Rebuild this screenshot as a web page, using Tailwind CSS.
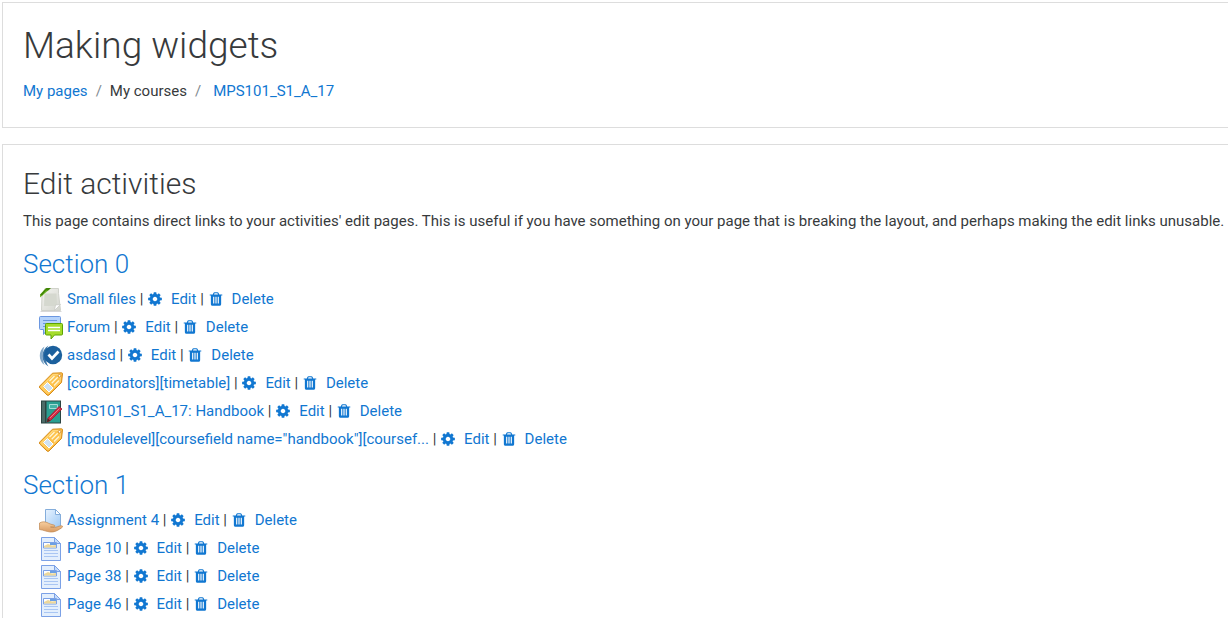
<!DOCTYPE html>
<html lang="en">
<head>
<meta charset="utf-8">
<meta name="viewport" content="width=device-width, initial-scale=1">
<title>Making widgets: Edit activities</title>
<script src="https://cdn.jsdelivr.net/npm/@tailwindcss/browser@4"></script>
</head>
<body class="bg-white pt-0.5 pl-0.5 font-[Roboto,sans-serif] text-[15px] leading-[23px] text-[#373a3c]">

  <!-- Icons used in the lists below -->
  <svg class="absolute size-0" aria-hidden="true">
    <defs>
      <linearGradient id="grey" x1="0" y1="0" x2="1" y2="1">
        <stop offset="0" stop-color="#f4f4f0"/><stop offset="1" stop-color="#d3d5ce"/>
      </linearGradient>
      <linearGradient id="blue" x1="0" y1="0" x2="1" y2="1">
        <stop offset="0" stop-color="#e8f3ff"/><stop offset="1" stop-color="#9cc8f5"/>
      </linearGradient>
      <linearGradient id="orange" x1="0" y1="0" x2="1" y2="1">
        <stop offset="0" stop-color="#ffd468"/><stop offset="1" stop-color="#fbae2c"/>
      </linearGradient>
      <linearGradient id="skin" x1="0" y1="0" x2="0" y2="1">
        <stop offset="0" stop-color="#f8cf9f"/><stop offset="1" stop-color="#d89a62"/>
      </linearGradient>
    </defs>
    <symbol id="cog" viewBox="0 0 1792 1792"><path d="M1152 896q0-106-75-181t-181-75-181 75-75 181 75 181 181 75 181-75 75-181zm512-109v222q0 12-8 23t-20 13l-185 28q-19 54-39 91 35 50 107 138 10 12 10 25t-9 23q-27 37-99 108t-94 71q-12 0-26-9l-138-108q-44 23-91 38-16 136-29 186-7 28-36 28h-222q-14 0-24.5-8.5t-11.5-21.5l-28-184q-49-16-90-37l-141 107q-10 9-25 9-14 0-25-11-126-114-165-168-7-10-7-23 0-12 8-23 15-21 51-66.5t54-70.5q-27-50-41-99l-183-27q-13-2-21-12.5t-8-23.5v-222q0-12 8-23t19-13l186-28q14-46 39-92-40-57-107-138-10-12-10-24 0-10 9-23 26-36 98.5-107.5t94.5-71.5q13 0 26 10l138 107q44-23 91-38 16-136 29-186 7-28 36-28h222q14 0 24.5 8.5t11.5 21.5l28 184q49 16 90 37l142-107q9-9 24-9 13 0 25 10 129 119 165 170 7 8 7 22 0 12-8 23-15 21-51 66.5t-54 70.5q26 50 41 98l183 28q13 2 21 12.5t8 23.5z"/></symbol>
    <symbol id="trash" viewBox="0 0 1792 1792"><path d="M704 1376v-704q0-14-9-23t-23-9h-64q-14 0-23 9t-9 23v704q0 14 9 23t23 9h64q14 0 23-9t9-23zm256 0v-704q0-14-9-23t-23-9h-64q-14 0-23 9t-9 23v704q0 14 9 23t23 9h64q14 0 23-9t9-23zm256 0v-704q0-14-9-23t-23-9h-64q-14 0-23 9t-9 23v704q0 14 9 23t23 9h64q14 0 23-9t9-23zm-544-992h448l-48-117q-7-9-17-11h-317q-10 2-17 11zm928 32v64q0 14-9 23t-23 9h-96v948q0 83-47 143.5t-113 60.5h-832q-66 0-113-58.5t-47-141.5v-952h-96q-14 0-23-9t-9-23v-64q0-14 9-23t23-9h309l70-167q15-37 54-63t79-26h320q40 0 79 26t54 63l70 167h309q14 0 23 9t9 23z"/></symbol>
    <symbol id="file" viewBox="0 0 24 24">
      <path d="M1.500 23.500h21" stroke="#d8d8d8"/>
      <path d="M6 .5h13.500v5l2 17H2.500L3 8z" fill="url(#grey)" stroke="#d0d2cb"/>
      <path d="M5.500 5.500h12l.5 12.500H5z" fill="#d5d8cf"/>
      <path d="M15.500 22.500l1-5.500 5-.5z" fill="#fff" stroke="#c4c6c0" stroke-width=".7"/>
      <path d="M1 9.500V6.500L6.500 .5H11.500z" fill="#74b62a"/>
      <path d="M1 7L7.500 0H12L9 2.500H7L3 7.500z" fill="#3f8505"/>
    </symbol>
    <symbol id="forum" viewBox="0 0 24 24">
      <path d="M1.500 .5h19a1 1 0 0 1 1 1v11a1 1 0 0 1-1 1H8l-3.500 5V13.500h-3a1 1 0 0 1-1-1v-11a1 1 0 0 1 1-1z" fill="#b5d3fb" stroke="#6b97e0"/>
      <path d="M4 4.500h14M4 7.500h14M4 10.500h5" stroke="#6b97e0"/>
      <path d="M7.500 7.500h15a1 1 0 0 1 1 1v9.500a1 1 0 0 1-1 1H15.500l-3.500 4V19H7.500a1 1 0 0 1-1-1V8.500a1 1 0 0 1 1-1z" fill="#a5dc2b" stroke="#5da302"/>
      <path d="M9 11.500h12M9 14.500h12" stroke="#fff" stroke-width="1.500"/>
    </symbol>
    <symbol id="check" viewBox="0 0 24 24">
      <path d="M5.500 2.500C-.8 6.500-.8 17 5.500 21 3 16 3 8 5.500 2.500z" fill="#7fa6c8"/>
      <path d="M9.500 1.500C1.500 5.500 1.500 18.500 9.500 22.500 5.500 17 5.500 7 9.500 1.500z" fill="#3d76a8"/>
      <circle cx="14" cy="11" r="9.200" fill="#1c609d"/>
      <path d="M9.500 10.500l3.500 4 6.500-7" fill="none" stroke="#fff" stroke-width="2.700"/>
    </symbol>
    <symbol id="label" viewBox="0 0 24 24">
      <path d="M13.500 1.200L22.500 .8q1 0 1 1L22.500 10.500 10 23q-1 .8-2 0L.8 16q-.8-1 0-2z" fill="url(#orange)" stroke="#d48c1c"/>
      <path d="M14 2.800L21.500 2.500 21 9.500 9 21.500 2.500 15z" fill="none" stroke="#ffe08f" stroke-width=".8"/>
      <path d="M4.500 14.500l4-4 5.500 5.500-4 4z" fill="#cfe2f2" stroke="#fff"/>
      <path d="M10.500 9l5-5M12.700 11.200l6-6M15 13.500l5-5" stroke="#fff6d6" stroke-width="1.300"/>
      <circle cx="20.500" cy="3.700" r="1.300" fill="#fff" stroke="#c9821f" stroke-width=".8"/>
    </symbol>
    <symbol id="book" viewBox="0 0 24 24">
      <path d="M2 .5h20v23H2z" fill="#2b4442"/>
      <path d="M3 1.500h3v21H3z" fill="#4c6a67"/>
      <path d="M7.500 1.500H21v21H7.500z" fill="#2a9e91"/>
      <path d="M10.500 4.500h8v4h-8z" fill="#43b3a6" stroke="#a3dcd5"/>
      <path d="M20 6.500l3 2.500L11.500 20.500 8 22l1-4z" fill="#cf2a45" stroke="#9c1a30" stroke-width=".8"/>
      <path d="M8 22l.8-3.500 2.500 2.200z" fill="#4a2a20"/>
      <path d="M20.500 8.500L11 18" stroke="#ec7788"/>
    </symbol>
    <symbol id="assign" viewBox="0 0 24 24">
      <path d="M6.500 .5h10l5 5v14h-15z" fill="url(#blue)" stroke="#84addb"/>
      <path d="M16.500 .5v5h5z" fill="#fff" stroke="#84addb"/>
      <path d="M.5 14c2.500-1.500 5-1.500 7.500-.5 2 1 4 2 7 2.500 1.500.5 1 2-.5 2h-3c3 .8 5 .5 7-.3 2-.8 4-1.200 5-.5.8.7-1 1.800-3 3-3 2-6 3-9 2.800-4-.3-7-2-11-2.500z" fill="url(#skin)" stroke="#bf8650" stroke-width=".7"/>
    </symbol>
    <symbol id="page" viewBox="0 0 24 24">
      <path d="M2.500 .5h13l6 6v17h-19z" fill="#e3effd" stroke="#7ba1e6"/>
      <path d="M15.500 .5v6h6z" fill="#c5dcfa" stroke="#7ba1e6"/>
      <path d="M4.500 5.500h13v5.500h-13z" fill="#fff" stroke="#7ba1e6"/>
      <path d="M5 9l4-2 4 1.500 4-.5v2.500H5z" fill="#ecd79a"/>
      <path d="M11 6h6v2h-6z" fill="#6b9fe3"/>
      <path d="M5 13.500h14M5 16.500h14M5 19.500h14" stroke="#a9c6f3"/>
    </symbol>
  </svg>

  <header class="border border-r-0 border-[#dddddd] px-5 pt-[21px] pb-6">
    <h1 class="mb-3 text-[37px] leading-[44px] font-light">Making widgets</h1>
    <nav aria-label="Breadcrumb">
      <ol class="flex">
        <li><a class="text-[#1177d1]" href="#">My pages</a></li>
        <li class="before:px-2 before:text-[#818a91] before:content-['/']">My courses</li>
        <li class="before:pr-3 before:pl-2 before:text-[#818a91] before:content-['/']"><a class="text-[#1177d1]" href="#">MPS101_S1_A_17</a></li>
      </ol>
    </nav>
  </header>

  <main class="mt-4 border border-r-0 border-b-0 border-[#dddddd] px-5 pt-[21px]">
    <h2 class="mb-2 text-[30px] leading-9 font-light">Edit activities</h2>
    <p class="mb-[15px] whitespace-nowrap">This page contains direct links to your activities' edit pages. This is useful if you have something on your page that is breaking the layout, and perhaps making the edit links unusable.</p>

    <!-- Section 0 -->
    <h3 class="mb-[5px] text-[26px] leading-8 font-light"><a class="text-[#1177d1]" href="#">Section 0</a></h3>
    <ul class="mb-4 pl-4 leading-7">
      <li class="h-7"><svg class="mr-1 inline-block size-6 align-middle"><use href="#file"/></svg><a class="text-[#1177d1]" href="#">Small files</a> | <a class="text-[#1177d1]" href="#"><svg class="mr-2 inline-block size-4 fill-current align-[-3px]"><use href="#cog"/></svg>Edit</a> | <a class="text-[#1177d1]" href="#"><svg class="mr-2 inline-block size-4 fill-current align-[-3px]"><use href="#trash"/></svg>Delete</a></li>
      <li class="h-7"><svg class="mr-1 inline-block size-6 align-middle"><use href="#forum"/></svg><a class="text-[#1177d1]" href="#">Forum</a> | <a class="text-[#1177d1]" href="#"><svg class="mr-2 inline-block size-4 fill-current align-[-3px]"><use href="#cog"/></svg>Edit</a> | <a class="text-[#1177d1]" href="#"><svg class="mr-2 inline-block size-4 fill-current align-[-3px]"><use href="#trash"/></svg>Delete</a></li>
      <li class="h-7"><svg class="mr-1 inline-block size-6 align-middle"><use href="#check"/></svg><a class="text-[#1177d1]" href="#">asdasd</a> | <a class="text-[#1177d1]" href="#"><svg class="mr-2 inline-block size-4 fill-current align-[-3px]"><use href="#cog"/></svg>Edit</a> | <a class="text-[#1177d1]" href="#"><svg class="mr-2 inline-block size-4 fill-current align-[-3px]"><use href="#trash"/></svg>Delete</a></li>
      <li class="h-7"><svg class="mr-1 inline-block size-6 align-middle"><use href="#label"/></svg><a class="text-[#1177d1]" href="#">[coordinators][timetable]</a> | <a class="text-[#1177d1]" href="#"><svg class="mr-2 inline-block size-4 fill-current align-[-3px]"><use href="#cog"/></svg>Edit</a> | <a class="text-[#1177d1]" href="#"><svg class="mr-2 inline-block size-4 fill-current align-[-3px]"><use href="#trash"/></svg>Delete</a></li>
      <li class="h-7"><svg class="mr-1 inline-block size-6 align-middle"><use href="#book"/></svg><a class="text-[#1177d1]" href="#">MPS101_S1_A_17: Handbook</a> | <a class="text-[#1177d1]" href="#"><svg class="mr-2 inline-block size-4 fill-current align-[-3px]"><use href="#cog"/></svg>Edit</a> | <a class="text-[#1177d1]" href="#"><svg class="mr-2 inline-block size-4 fill-current align-[-3px]"><use href="#trash"/></svg>Delete</a></li>
      <li class="h-7"><svg class="mr-1 inline-block size-6 align-middle"><use href="#label"/></svg><a class="text-[#1177d1]" href="#">[modulelevel][coursefield name="handbook"][coursef...</a> | <a class="text-[#1177d1]" href="#"><svg class="mr-2 inline-block size-4 fill-current align-[-3px]"><use href="#cog"/></svg>Edit</a> | <a class="text-[#1177d1]" href="#"><svg class="mr-2 inline-block size-4 fill-current align-[-3px]"><use href="#trash"/></svg>Delete</a></li>
    </ul>

    <!-- Section 1 -->
    <h3 class="mb-[5px] text-[26px] leading-8 font-light"><a class="text-[#1177d1]" href="#">Section 1</a></h3>
    <ul class="pl-4 leading-7">
      <li class="h-7"><svg class="mr-1 inline-block size-6 align-middle"><use href="#assign"/></svg><a class="text-[#1177d1]" href="#">Assignment 4</a> | <a class="text-[#1177d1]" href="#"><svg class="mr-2 inline-block size-4 fill-current align-[-3px]"><use href="#cog"/></svg>Edit</a> | <a class="text-[#1177d1]" href="#"><svg class="mr-2 inline-block size-4 fill-current align-[-3px]"><use href="#trash"/></svg>Delete</a></li>
      <li class="h-7"><svg class="mr-1 inline-block size-6 align-middle"><use href="#page"/></svg><a class="text-[#1177d1]" href="#">Page 10</a> | <a class="text-[#1177d1]" href="#"><svg class="mr-2 inline-block size-4 fill-current align-[-3px]"><use href="#cog"/></svg>Edit</a> | <a class="text-[#1177d1]" href="#"><svg class="mr-2 inline-block size-4 fill-current align-[-3px]"><use href="#trash"/></svg>Delete</a></li>
      <li class="h-7"><svg class="mr-1 inline-block size-6 align-middle"><use href="#page"/></svg><a class="text-[#1177d1]" href="#">Page 38</a> | <a class="text-[#1177d1]" href="#"><svg class="mr-2 inline-block size-4 fill-current align-[-3px]"><use href="#cog"/></svg>Edit</a> | <a class="text-[#1177d1]" href="#"><svg class="mr-2 inline-block size-4 fill-current align-[-3px]"><use href="#trash"/></svg>Delete</a></li>
      <li class="h-7"><svg class="mr-1 inline-block size-6 align-middle"><use href="#page"/></svg><a class="text-[#1177d1]" href="#">Page 46</a> | <a class="text-[#1177d1]" href="#"><svg class="mr-2 inline-block size-4 fill-current align-[-3px]"><use href="#cog"/></svg>Edit</a> | <a class="text-[#1177d1]" href="#"><svg class="mr-2 inline-block size-4 fill-current align-[-3px]"><use href="#trash"/></svg>Delete</a></li>
    </ul>
  </main>

</body>
</html>
